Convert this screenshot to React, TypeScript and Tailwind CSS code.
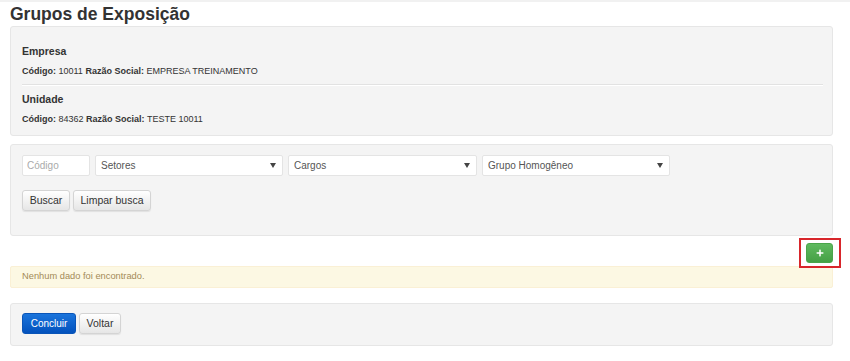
import { FaPlus } from "react-icons/fa";

const Caret = () => (
  <svg width="6" height="5" viewBox="0 0 6 5" className="shrink-0">
    <path d="M0 0 L6 0 L3 5 Z" fill="#444" />
  </svg>
);

const Select = ({ label, width }: { label: string; width: string }) => (
  <div
    className={`${width} h-[21px] bg-white border border-[#e4e4e4] rounded-[2px] flex items-center justify-between pl-[5px] pr-[6px] text-[10px] text-[#555]`}
  >
    <span>{label}</span>
    <Caret />
  </div>
);

const GrayButton = ({ children, width }: { children: string; width: string }) => (
  <button
    className={`${width} h-[21px] rounded-[3px] border border-[#d4d4d4] bg-gradient-to-b from-white to-[#e6e6e6] text-[10.5px] text-[#333] shadow-[0_1px_1px_rgba(0,0,0,0.08)] flex items-center justify-center`}
  >
    {children}
  </button>
);

const Info = ({ code, name }: { code: string; name: string }) => (
  <p className="text-[9px] leading-[14px] text-[#333]">
    <b>Código:</b> {code} <b>Razão Social:</b> {name}
  </p>
);

export default function App() {
  return (
    <div
      className="w-[850px] h-[361px] bg-white relative overflow-hidden"
      style={{ fontFamily: '"Liberation Sans", Arial, sans-serif' }}
    >
      <div className="h-[2px] bg-[#f1f1f1]" />
      <div className="w-[823px] ml-[10px]">
        <h1 className="text-[17.5px] leading-[22px] font-bold text-[#333] mt-[1px]">
          Grupos de Exposição
        </h1>

        <div className="mt-[1px] border border-[#e6e6e6] rounded-[3px] bg-[#f4f4f4] pl-[11px] pr-[9px] pt-[17px] pb-[9px]">
          <p className="text-[10.5px] leading-[14px] font-bold text-[#333]">Empresa</p>
          <div className="mt-[6px]">
            <Info code="10011" name="EMPRESA TREINAMENTO" />
          </div>
          <div className="mt-[6px] h-[2px] bg-[#e2e2e2] border-b border-white" />
          <p className="mt-[6px] text-[10.5px] leading-[14px] font-bold text-[#333]">Unidade</p>
          <div className="mt-[6px]">
            <Info code="84362" name="TESTE 10011" />
          </div>
        </div>

        <div className="mt-[8px] h-[92px] border border-[#e6e6e6] rounded-[3px] bg-[#f4f4f4] pl-[11px] pt-[10px]">
          <div className="flex gap-[5px]">
            <div className="w-[68px] h-[21px] bg-white border border-[#e4e4e4] rounded-[2px] flex items-center pl-[4px] text-[10px] text-[#aaa]">
              Código
            </div>
            <Select label="Setores" width="w-[188px]" />
            <Select label="Cargos" width="w-[189px]" />
            <Select label="Grupo Homogêneo" width="w-[188px]" />
          </div>
          <div className="flex gap-[3px] mt-[14px]">
            <GrayButton width="w-[48px]">Buscar</GrayButton>
            <GrayButton width="w-[78px]">Limpar busca</GrayButton>
          </div>
        </div>

        <div className="flex justify-end mt-[7px]">
          <div className="relative">
            <button className="w-[27px] h-[20px] rounded-[3px] bg-gradient-to-b from-[#5fba5f] to-[#45a045] border border-[#4aa54a] flex items-center justify-center text-white">
              <FaPlus className="text-[8px]" />
            </button>
            <div className="absolute left-[-7px] top-[-5px] w-[42px] h-[30px] border-2 border-[#d8262b]" />
          </div>
        </div>

        <div className="mt-[3px] h-[22px] bg-[#fcf8e3] border border-[#faf0d5] rounded-[2px] flex items-center pl-[11px] text-[9.3px] text-[#a38a57]">
          Nenhum dado foi encontrado.
        </div>

        <div className="mt-[15px] h-[43px] border border-[#e6e6e6] rounded-[3px] bg-[#f4f4f4] pl-[11px] pt-[9px]">
          <div className="flex gap-[3px]">
            <button className="w-[54px] h-[21px] rounded-[3px] bg-gradient-to-b from-[#1a74dc] to-[#0452bd] border border-[#0a55b8] text-[10px] text-white flex items-center justify-center">
              Concluir
            </button>
            <GrayButton width="w-[42px]">Voltar</GrayButton>
          </div>
        </div>
      </div>
    </div>
  );
}
